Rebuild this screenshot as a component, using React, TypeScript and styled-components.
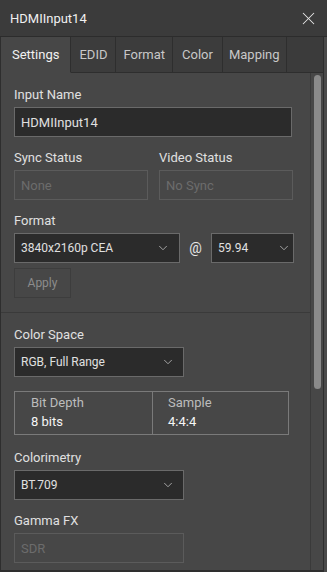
import React, { useState } from "react";
import styled, { createGlobalStyle } from "styled-components";
import { X, ChevronDown } from "lucide-react";

const GlobalStyle = createGlobalStyle`
  html, body {
    margin: 0;
    padding: 0;
    background: #3a3a3a;
  }
  * {
    box-sizing: border-box;
  }
`;

const Window = styled.div`
  width: 327px;
  height: 572px;
  display: flex;
  flex-direction: column;
  background: #3b3b3b;
  font-family: Roboto, "Noto Sans", Arial, sans-serif;
  font-size: 13px;
  color: #e2e2e2;
  overflow: hidden;
`;

const TitleBar = styled.div`
  height: 37px;
  flex: none;
  display: flex;
  align-items: center;
  justify-content: space-between;
  padding: 0 8px 0 10px;
  border-bottom: 1px solid #2c2c2c;
  color: #f0f0f0;
  font-size: 13px;
`;

const CloseButton = styled.button`
  display: flex;
  align-items: center;
  justify-content: center;
  padding: 0;
  border: none;
  background: transparent;
  color: #e6e6e6;
  cursor: pointer;
`;

const Frame = styled.div`
  flex: 1;
  display: flex;
  min-height: 0;
`;

const Main = styled.div`
  width: 324px;
  display: flex;
  flex-direction: column;
  border-left: 1px solid #2e2e2e;
  border-right: 1px solid #2e2e2e;
  border-bottom: 2px solid #2e2e2e;
`;

const Edge = styled.div`
  flex: 1;
  background: #4a4a4a;
`;

const TabBar = styled.div`
  height: 36px;
  flex: none;
  display: flex;
`;

const Tab = styled.div<{ $active?: boolean; $pad: number }>`
  display: flex;
  align-items: center;
  padding: 0 ${(p) => p.$pad}px;
  border-right: 1px solid #2e2e2e;
  border-bottom: 1px solid ${(p) => (p.$active ? "#474747" : "#2e2e2e")};
  background: ${(p) => (p.$active ? "#474747" : "#3c3c3c")};
  color: ${(p) => (p.$active ? "#f2f2f2" : "#c8c8c8")};
  cursor: pointer;
`;

const TabFiller = styled.div`
  flex: 1;
  border-bottom: 1px solid #2e2e2e;
`;

const Body = styled.div`
  flex: 1;
  display: flex;
  min-height: 0;
  background: #474747;
`;

const Content = styled.div`
  flex: 1;
  overflow: hidden;
`;

const Section = styled.div<{ $divider?: boolean }>`
  display: flex;
  flex-direction: column;
  padding: 14px 0 14px 13px;
  border-bottom: ${(p) => (p.$divider ? "1px solid #3a3a3a" : "none")};
`;

const Field = styled.div<{ $top?: number }>`
  display: flex;
  flex-direction: column;
  gap: 4px;
  margin-top: ${(p) => p.$top ?? 0}px;
`;

const Label = styled.div`
  line-height: 16px;
  height: 16px;
  color: #e0e0e0;
`;

const Row = styled.div<{ $gap: number; $top?: number }>`
  display: flex;
  align-items: center;
  gap: ${(p) => p.$gap}px;
  margin-top: ${(p) => p.$top ?? 0}px;
`;

const TextBox = styled.div<{ $width: number; $disabled?: boolean }>`
  width: ${(p) => p.$width}px;
  height: 30px;
  display: flex;
  align-items: center;
  padding-left: 6px;
  background: ${(p) => (p.$disabled ? "transparent" : "#2b2b2b")};
  border: 1px solid ${(p) => (p.$disabled ? "#5b5b5b" : "#6a6a6a")};
  color: ${(p) => (p.$disabled ? "#6c6c6c" : "#e0e0e0")};
`;

const Select = styled.div<{ $width: number; $chevronPad: number }>`
  width: ${(p) => p.$width}px;
  height: 30px;
  display: flex;
  align-items: center;
  justify-content: space-between;
  padding: 0 ${(p) => p.$chevronPad}px 0 6px;
  background: #2b2b2b;
  border: 1px solid #6a6a6a;
  color: #e0e0e0;
  font-size: 12px;
  cursor: pointer;

  svg {
    color: #bdbdbd;
  }
`;

const At = styled.span`
  width: 13px;
  text-align: center;
  color: #e8e8e8;
  font-size: 14px;
`;

const ApplyButton = styled.button`
  width: 57px;
  height: 30px;
  margin-top: 5px;
  background: transparent;
  border: 1px solid #3d3d3d;
  color: #8c8c8c;
  font-family: inherit;
  font-size: 12px;
  padding: 0;
`;

const InfoBox = styled.div`
  width: 275px;
  margin-top: 14px;
  display: grid;
  grid-template-columns: 137px 1fr;
  border: 1px solid #7a7a7a;
`;

const InfoCell = styled.div<{ $pad: number }>`
  display: flex;
  flex-direction: column;
  gap: 3px;
  padding: 3px 0 4px ${(p) => p.$pad}px;

  & + & {
    border-left: 1px solid #7a7a7a;
  }
`;

const InfoTitle = styled.div`
  line-height: 16px;
  color: #bcbcbc;
`;

const InfoValue = styled.div`
  line-height: 16px;
  color: #f6f6f6;
`;

const ScrollTrack = styled.div`
  width: 13px;
  flex: none;
  display: flex;
  justify-content: center;
  padding-top: 2px;
  border-left: 1px solid #3a3a3a;
`;

const Thumb = styled.div`
  width: 7px;
  height: 314px;
  border-radius: 4px;
  background: #8a8a8a;
`;

const tabs = [
  { name: "Settings", pad: 11 },
  { name: "EDID", pad: 8 },
  { name: "Format", pad: 7 },
  { name: "Color", pad: 9 },
  { name: "Mapping", pad: 6 },
];

const Chevron = () => <ChevronDown size={14} strokeWidth={1.4} />;

export default function App() {
  const [active, setActive] = useState("Settings");

  return (
    <>
      <GlobalStyle />
      <Window>
        <TitleBar>
          <span>HDMIInput14</span>
          <CloseButton aria-label="Close">
            <X size={21} strokeWidth={1.2} />
          </CloseButton>
        </TitleBar>
        <Frame>
          <Main>
            <TabBar>
              {tabs.map((t) => (
                <Tab
                  key={t.name}
                  $pad={t.pad}
                  $active={active === t.name}
                  onClick={() => setActive(t.name)}
                >
                  {t.name}
                </Tab>
              ))}
              <TabFiller />
            </TabBar>
            <Body>
              <Content>
                <Section $divider>
                  <Field>
                    <Label>Input Name</Label>
                    <TextBox $width={278}>HDMIInput14</TextBox>
                  </Field>
                  <Row $gap={11} $top={13}>
                    <Field>
                      <Label>Sync Status</Label>
                      <TextBox $width={134} $disabled>
                        None
                      </TextBox>
                    </Field>
                    <Field>
                      <Label>Video Status</Label>
                      <TextBox $width={134} $disabled>
                        No Sync
                      </TextBox>
                    </Field>
                  </Row>
                  <Field $top={13}>
                    <Label>Format</Label>
                    <Row $gap={9}>
                      <Select $width={166} $chevronPad={9}>
                        3840x2160p CEA
                        <Chevron />
                      </Select>
                      <At>@</At>
                      <Select $width={83} $chevronPad={2}>
                        59.94
                        <Chevron />
                      </Select>
                    </Row>
                  </Field>
                  <ApplyButton>Apply</ApplyButton>
                </Section>
                <Section>
                  <Field>
                    <Label>Color Space</Label>
                    <Select $width={170} $chevronPad={8}>
                      RGB, Full Range
                      <Chevron />
                    </Select>
                  </Field>
                  <InfoBox>
                    <InfoCell $pad={16}>
                      <InfoTitle>Bit Depth</InfoTitle>
                      <InfoValue>8 bits</InfoValue>
                    </InfoCell>
                    <InfoCell $pad={15}>
                      <InfoTitle>Sample</InfoTitle>
                      <InfoValue>4:4:4</InfoValue>
                    </InfoCell>
                  </InfoBox>
                  <Field $top={15}>
                    <Label>Colorimetry</Label>
                    <Select $width={170} $chevronPad={8}>
                      BT.709
                      <Chevron />
                    </Select>
                  </Field>
                  <Field $top={13}>
                    <Label>Gamma FX</Label>
                    <TextBox $width={170} $disabled>
                      SDR
                    </TextBox>
                  </Field>
                </Section>
              </Content>
              <ScrollTrack>
                <Thumb />
              </ScrollTrack>
            </Body>
          </Main>
          <Edge />
        </Frame>
      </Window>
    </>
  );
}
